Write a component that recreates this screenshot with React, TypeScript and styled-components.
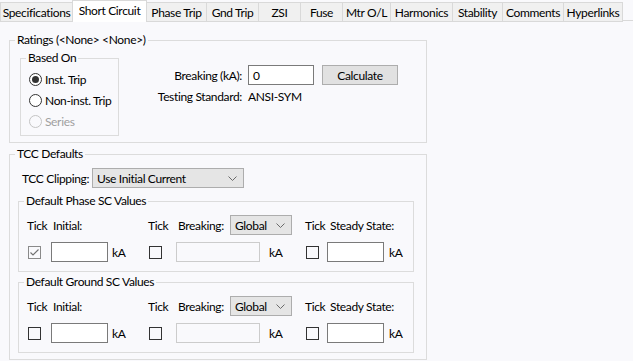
import React from 'react';
import styled, { createGlobalStyle, css } from 'styled-components';

const Global = createGlobalStyle`
  html, body { margin: 0; padding: 0; background: #f9f9fc; }
  body { font-family: Lato, "Segoe UI", "Noto Sans", sans-serif; font-size: 12px; letter-spacing: -0.35px; color: #000; }
  #root { width: 633px; height: 361px; overflow: hidden; }
  * { box-sizing: border-box; }
`;

const Page = styled.div`
  width: 633px;
  height: 361px;
  display: flex;
  flex-direction: column;
  background: #f9f9fc;
`;

const TabBar = styled.div`
  display: flex;
  height: 22px;
  align-items: flex-start;
`;

const Tab = styled.div<{ $w: number; $active?: boolean; $first?: boolean }>`
  width: ${p => p.$w}px;
  flex: none;
  display: flex;
  align-items: center;
  justify-content: center;
  white-space: nowrap;
  ${p =>
    p.$active
      ? css`
          height: 22px;
          margin-left: -1px;
          width: ${p.$w + 1}px;
          background: #ffffff;
          border: 1px solid #d9d9d9;
          border-bottom: none;
          padding-bottom: 2px;
          position: relative;
          z-index: 1;
        `
      : css`
          height: 20px;
          margin-top: 2px;
          background: #f0f0f0;
          border-top: 1px solid #d9d9d9;
          border-right: 1px solid #d9d9d9;
          border-bottom: 1px solid #d9d9d9;
          border-left: ${p.$first ? '1px solid #d9d9d9' : 'none'};
          padding-top: 1px;
        `}
`;

const TabFiller = styled.div`
  flex: 1;
  height: 21px;
  border-bottom: 1px solid #d9d9d9;
`;

const Content = styled.div`
  padding: 11px 0 0 9px;
  display: flex;
  flex-direction: column;
  gap: 4px;
`;

const Group = styled.fieldset<{ $w: number }>`
  margin: 0;
  padding: 0;
  min-width: 0;
  width: ${p => p.$w}px;
  border: 1px solid #dcdcdc;
`;

const Legend = styled.legend`
  padding: 0 2px;
  margin-left: 5px;
  line-height: 14px;
  height: 14px;
  white-space: nowrap;
`;

const RatingsBody = styled.div`
  display: flex;
  align-items: flex-start;
  padding: 4px 10px 6px 10px;
`;

const RadioList = styled.div`
  display: flex;
  flex-direction: column;
  padding: 4px 0 3px 8px;
`;

const RadioRow = styled.div<{ $disabled?: boolean }>`
  display: flex;
  align-items: center;
  gap: 3px;
  height: 21px;
  color: ${p => (p.$disabled ? '#a0a0a0' : '#000')};
`;

const RadioCircle = styled.span<{ $checked?: boolean; $disabled?: boolean }>`
  width: 13px;
  height: 13px;
  border-radius: 50%;
  border: 1px solid ${p => (p.$disabled ? '#c4c4c4' : '#333')};
  background: ${p => (p.$disabled ? 'transparent' : '#fff')};
  display: flex;
  align-items: center;
  justify-content: center;
  &::after {
    content: '';
    display: ${p => (p.$checked ? 'block' : 'none')};
    width: 7px;
    height: 7px;
    border-radius: 50%;
    background: #333;
  }
`;

const FormGrid = styled.div`
  display: grid;
  grid-template-columns: 90px auto;
  column-gap: 6px;
  row-gap: 4px;
  margin: 14px 0 0 33px;
  align-items: center;
`;

const Label = styled.span<{ $right?: boolean }>`
  white-space: nowrap;
  text-align: ${p => (p.$right ? 'right' : 'left')};
`;

const InlineRow = styled.div`
  display: flex;
  align-items: center;
  gap: 8px;
`;

const TextBox = styled.div<{ $w: number; $disabled?: boolean }>`
  width: ${p => p.$w}px;
  height: 20px;
  border: 1px solid ${p => (p.$disabled ? '#cccccc' : '#7a7a7a')};
  background: ${p => (p.$disabled ? 'transparent' : '#ffffff')};
  padding-left: 4px;
  display: flex;
  align-items: center;
`;

const Button = styled.div`
  width: 76px;
  height: 20px;
  border: 1px solid #adadad;
  background: #e1e1e1;
  display: flex;
  align-items: center;
  justify-content: center;
`;

const TccBody = styled.div`
  display: flex;
  flex-direction: column;
  padding: 7px 8px 6px 8px;
`;

const ClipRow = styled.div`
  display: flex;
  align-items: center;
  height: 20px;
  margin: 0 0 6px 4px;
`;

const ClipLabel = styled.span`
  width: 70px;
  white-space: nowrap;
`;

const SelectBox = styled.div<{ $w: number }>`
  width: ${p => p.$w}px;
  height: 20px;
  border: 1px solid #adadad;
  background: #e5e5e5;
  display: flex;
  align-items: center;
  justify-content: space-between;
  padding: 0 6px 0 4px;
  white-space: nowrap;
`;

const SubGroups = styled.div`
  display: flex;
  flex-direction: column;
  gap: 3px;
`;

const ScGrid = styled.div`
  display: grid;
  grid-template-columns: 24px 57px 40px 28px 84px 45px 22px 57px auto;
  grid-template-rows: 20px 20px;
  row-gap: 7px;
  align-items: center;
  padding: 7px 0 9px 8px;
`;

const Cell = styled.div<{ $span?: number; $pad?: number }>`
  grid-column: ${p => (p.$span ? `span ${p.$span}` : 'auto')};
  padding-left: ${p => p.$pad ?? 0}px;
  display: flex;
  align-items: center;
  white-space: nowrap;
`;

const BreakLabel = styled.span`
  width: 52px;
`;

const Check = styled.span<{ $checked?: boolean }>`
  width: 13px;
  height: 13px;
  margin-left: 1px;
  border: 1px solid ${p => (p.$checked ? '#8a8a8a' : '#333')};
  background: transparent;
  display: flex;
  align-items: center;
  justify-content: center;
`;

const Chevron = () => (
  <svg width="9" height="5" viewBox="0 0 9 5" fill="none">
    <polyline points="0.5,0.5 4.5,4.5 8.5,0.5" stroke="#6a6a6a" strokeWidth="1" />
  </svg>
);

const CheckMark = () => (
  <svg width="11" height="11" viewBox="0 0 11 11" fill="none">
    <polyline points="1.5,5.5 4,8 9.5,2.5" stroke="#707070" strokeWidth="1.1" />
  </svg>
);

const tabs: { label: string; w: number; active?: boolean }[] = [
  { label: 'Specifications', w: 73 },
  { label: 'Short Circuit', w: 74, active: true },
  { label: 'Phase Trip', w: 60 },
  { label: 'Gnd Trip', w: 52 },
  { label: 'ZSI', w: 42 },
  { label: 'Fuse', w: 42 },
  { label: 'Mtr O/L', w: 48 },
  { label: 'Harmonics', w: 62 },
  { label: 'Stability', w: 50 },
  { label: 'Comments', w: 61 },
  { label: 'Hyperlinks', w: 59 },
];

const ScGroup: React.FC<{ title: string; initialChecked?: boolean }> = ({ title, initialChecked }) => (
  <Group $w={396}>
    <Legend>{title}</Legend>
    <ScGrid>
      <Cell>Tick</Cell>
      <Cell $span={2} $pad={2}>Initial:</Cell>
      <Cell>Tick</Cell>
      <Cell $span={2} $pad={2}>
        <BreakLabel>Breaking:</BreakLabel>
        <SelectBox $w={62}>
          <span>Global</span>
          <Chevron />
        </SelectBox>
      </Cell>
      <Cell>Tick</Cell>
      <Cell $span={2} $pad={3}>Steady State:</Cell>

      <Cell>
        <Check $checked={initialChecked}>{initialChecked && <CheckMark />}</Check>
      </Cell>
      <Cell>
        <TextBox $w={57} />
      </Cell>
      <Cell $pad={4}>kA</Cell>
      <Cell>
        <Check />
      </Cell>
      <Cell>
        <TextBox $w={84} $disabled />
      </Cell>
      <Cell $pad={9}>kA</Cell>
      <Cell>
        <Check />
      </Cell>
      <Cell>
        <TextBox $w={57} />
      </Cell>
      <Cell $pad={5}>kA</Cell>
    </ScGrid>
  </Group>
);

export default function App() {
  return (
    <Page>
      <Global />
      <TabBar>
        {tabs.map((t, i) => (
          <Tab key={t.label} $w={t.w} $active={t.active} $first={i === 0}>
            {t.label}
          </Tab>
        ))}
        <TabFiller />
      </TabBar>
      <Content>
        <Group $w={418}>
          <Legend>Ratings (&lt;None&gt; &lt;None&gt;)</Legend>
          <RatingsBody>
            <Group $w={99}>
              <Legend>Based On</Legend>
              <RadioList>
                <RadioRow>
                  <RadioCircle $checked />
                  <span>Inst. Trip</span>
                </RadioRow>
                <RadioRow>
                  <RadioCircle />
                  <span>Non-inst. Trip</span>
                </RadioRow>
                <RadioRow $disabled>
                  <RadioCircle $disabled />
                  <span>Series</span>
                </RadioRow>
              </RadioList>
            </Group>
            <FormGrid>
              <Label $right>Breaking (kA):</Label>
              <InlineRow>
                <TextBox $w={66}>0</TextBox>
                <Button>Calculate</Button>
              </InlineRow>
              <Label $right>Testing Standard:</Label>
              <Label>ANSI-SYM</Label>
            </FormGrid>
          </RatingsBody>
        </Group>
        <Group $w={418}>
          <Legend>TCC Defaults</Legend>
          <TccBody>
            <ClipRow>
              <ClipLabel>TCC Clipping:</ClipLabel>
              <SelectBox $w={152}>
                <span>Use Initial Current</span>
                <Chevron />
              </SelectBox>
            </ClipRow>
            <SubGroups>
              <ScGroup title="Default Phase SC Values" initialChecked />
              <ScGroup title="Default Ground SC Values" />
            </SubGroups>
          </TccBody>
        </Group>
      </Content>
    </Page>
  );
}
